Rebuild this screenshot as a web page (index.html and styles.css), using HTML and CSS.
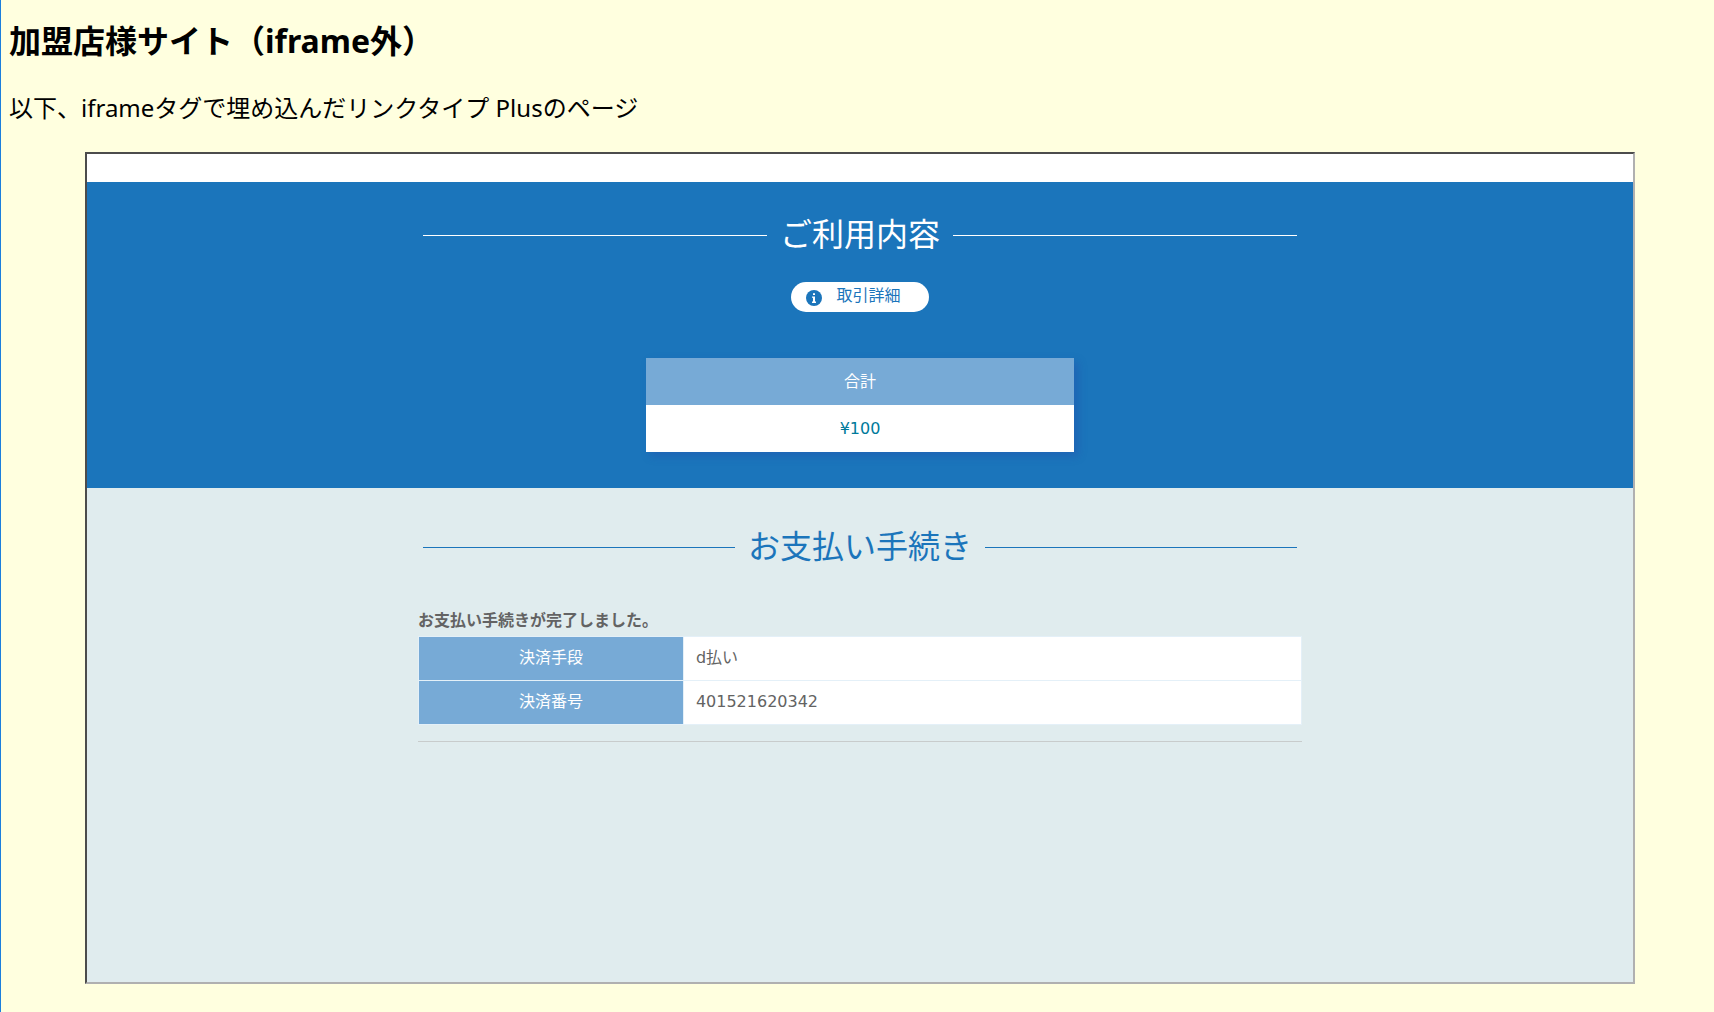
FILE: index.html
```html
<!DOCTYPE html>
<html lang="ja">

<head>
    <meta charset="UTF-8">
    <meta name="viewport" content="width=device-width, initial-scale=1.0">
    <title>加盟店様サイト</title>
    <link rel="stylesheet" href="styles.css">
</head>

<body>
    <h1 class="site-title">加盟店様サイト（iframe外）</h1>
    <p class="site-lead">以下、iframeタグで埋め込んだリンクタイプ Plusのページ</p>

    <main class="frame">
        <section class="usage">
            <div class="container">
                <h2 class="heading">ご利用内容</h2>
                <button type="button" class="detail-button">
                    <svg class="detail-icon" viewBox="0 0 16 16" aria-hidden="true">
                        <circle cx="8" cy="8" r="8" fill="#1b75bb"/>
                        <path d="M7 3.2h2v1.8H7zM6 6.4h3v5.2h1V13H6v-1.4h1V7.8H6z" fill="#fff"/>
                    </svg>
                    取引詳細
                </button>
                <table class="total">
                    <thead>
                        <tr><th scope="col">合計</th></tr>
                    </thead>
                    <tbody>
                        <tr><td>¥100</td></tr>
                    </tbody>
                </table>
            </div>
        </section>

        <section class="payment">
            <div class="container">
                <h2 class="heading">お支払い手続き</h2>
                <p class="message">お支払い手続きが完了しました。</p>
                <table class="result">
                    <tr>
                        <th scope="row">決済手段</th>
                        <td>d払い</td>
                    </tr>
                    <tr>
                        <th scope="row">決済番号</th>
                        <td>401521620342</td>
                    </tr>
                </table>
                <hr class="divider">
            </div>
        </section>
    </main>
</body>

</html>
```

FILE: styles.css
```css
* {
    box-sizing: border-box;
}

body {
    display: flex;
    flex-direction: column;
    min-height: 100vh;
    margin: 0;
    padding: 17px 8px 28px;
    border-left: 1px solid #1b7fdc;
    background-color: #ffffdf;
    color: #000;
    font-family: "Noto Sans", "Noto Sans CJK JP", sans-serif;
}

.site-title {
    margin: 0;
    font-size: 32px;
    line-height: 48px;
}

.site-lead {
    margin: 24px 0 25px;
    font-size: 24px;
    line-height: 38px;
}

/* embedded page */
.frame {
    display: flex;
    flex: 1;
    flex-direction: column;
    margin: 0 71px 0 76px;
    padding-top: 28px;
    border: 2px solid;
    border-color: #4c4c4c #b0b0b0 #b0b0b0 #4c4c4c;
    background-color: #fff;
    color: #636363;
    font-family: "DejaVu Sans", "Noto Sans CJK JP", sans-serif;
    font-size: 16px;
    line-height: 24px;
}

.container {
    max-width: 884px;
    margin: 0 auto;
}

.usage {
    padding: 29px 0 36px;
    background-color: #1b75bb;
    color: #fff;
}

.payment {
    flex: 1;
    padding: 35px 0;
    background-color: #e0ecee;
}

/* heading with a line on both sides */
.heading {
    display: flex;
    align-items: center;
    gap: 13px;
    margin: 0;
    padding: 0 5px;
    font-size: 32px;
    font-weight: normal;
    line-height: 48px;
}

.heading::before,
.heading::after {
    content: '';
    flex: 1;
    height: 1px;
    background-color: currentColor;
}

.payment .heading {
    color: #1b75bb;
}

.detail-button {
    display: flex;
    align-items: center;
    gap: 14px;
    height: 30px;
    margin: 23px auto 46px;
    padding: 0 28px 2px 15px;
    border: 0;
    border-radius: 15px;
    background-color: #fff;
    color: #1b75bb;
    font-family: inherit;
    font-size: 16px;
    line-height: 24px;
    cursor: pointer;
}

.detail-icon {
    width: 16px;
    height: 16px;
    margin-top: 4px;
}

.total {
    width: 428px;
    max-width: 100%;
    margin: 0 auto;
    border-collapse: collapse;
    box-shadow: 4px 4px 8px rgba(40, 70, 170, 0.35);
    text-align: center;
}

.total th,
.total td {
    height: 47px;
    padding: 0;
}

.total th {
    background-color: #77aad6;
    font-weight: normal;
}

.total td {
    background-color: #fff;
    color: #007a9b;
}

.message {
    margin: 38px 0 3px;
    font-weight: bold;
}

.result {
    width: 100%;
    border-collapse: collapse;
}

.result th,
.result td {
    height: 44px;
    padding: 0 12px 2px;
    border: 1px solid #e4f0f8;
}

.result th {
    width: 30%;
    background-color: #77aad6;
    color: #fff;
    font-weight: normal;
}

.result td {
    background-color: #fff;
}

.divider {
    margin: 16px 0 0;
    border: 0;
    border-top: 1px solid #c8cccc;
}
```
